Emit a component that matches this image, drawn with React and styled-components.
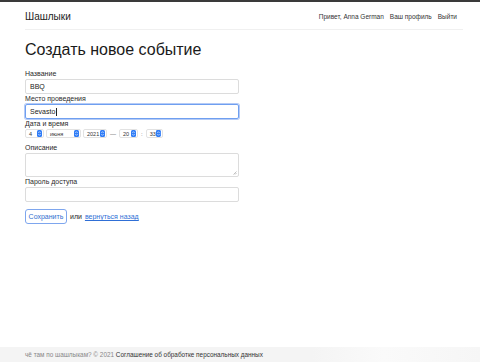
import React from "react";
import styled, { createGlobalStyle } from "styled-components";

const GlobalStyle = createGlobalStyle`
  html, body {
    margin: 0;
    padding: 0;
    background: #fff;
  }
  body {
    font-family: "Liberation Sans", Arial, sans-serif;
    color: #222;
  }
`;

const Page = styled.div`
  min-height: 362px;
  display: flex;
  flex-direction: column;
  border-top: 2px solid #3a3a3a;
  box-sizing: border-box;
`;

const Container = styled.div`
  width: 438px;
  margin-left: 25px;
  box-sizing: border-box;
`;

const Header = styled.header`
  display: flex;
  align-items: center;
  justify-content: space-between;
  height: 27px;
  border-bottom: 1px solid #f0f0f0;
`;

const Brand = styled.div`
  font-size: 10px;
  color: #222;
  padding-top: 1px;
`;

const Nav = styled.nav`
  display: flex;
  gap: 6px;
  font-size: 6.5px;
  color: #333;
  padding-right: 6px;
  padding-top: 1px;
`;

const Title = styled.h1`
  font-size: 16px;
  font-weight: 500;
  margin: 10px 0 10px;
  line-height: 20px;
  color: #1a1a1a;
`;

const Group = styled.div`
  margin-bottom: ${(p) => p.$gap || 1}px;
`;

const Label = styled.div`
  font-size: 7px;
  line-height: 8px;
  margin-bottom: 1px;
  color: #2a2a2a;
`;

const Field = styled.div`
  width: 214px;
  height: ${(p) => p.$h || 15}px;
  box-sizing: border-box;
  border: 1px solid ${(p) => (p.$focus ? "#6f9ff0" : "#dcdcdc")};
  box-shadow: ${(p) => (p.$focus ? "0 0 0 1px rgba(90,140,235,0.45)" : "none")};
  border-radius: 2px;
  font-size: 7px;
  display: flex;
  align-items: center;
  padding-left: 4px;
  color: #222;
  position: relative;
`;

const Caret = styled.span`
  display: inline-block;
  width: 1px;
  height: 8px;
  background: #222;
  margin-left: 1px;
`;

const Grip = styled.svg`
  position: absolute;
  right: 1px;
  bottom: 1px;
`;

const DateRow = styled.div`
  display: flex;
  align-items: center;
  gap: 2px;
  font-size: 6px;
  color: #333;
`;

const Select = styled.div`
  width: ${(p) => p.$w}px;
  height: 9px;
  box-sizing: border-box;
  border: 1px solid #e2e2e2;
  border-radius: 2px;
  display: flex;
  align-items: center;
  justify-content: space-between;
  padding-left: ${(p) => p.$pl || 3}px;
  padding-right: 1px;
  font-size: 5.5px;
`;

const Sep = styled.span`
  margin: 0 1px;
  font-size: 6px;
  color: #555;
`;

const Stepper = () => (
  <svg width="5" height="7" viewBox="0 0 5 7">
    <rect width="5" height="7" rx="1.5" fill="#2f7cf6" />
    <path d="M1.4 2.8 L2.5 1.7 L3.6 2.8 M1.4 4.2 L2.5 5.3 L3.6 4.2" stroke="#fff" strokeWidth="0.7" fill="none" />
  </svg>
);

const Actions = styled.div`
  display: flex;
  align-items: center;
  gap: 3px;
  margin-top: 7px;
  font-size: 7px;
`;

const Button = styled.button`
  height: 15px;
  width: 42px;
  padding: 0;
  border: 1px solid #7ea6ee;
  border-radius: 3px;
  background: #fff;
  color: #2f6fd0;
  font-family: inherit;
  font-size: 7px;
`;

const Link = styled.a`
  color: #2f6fd6;
  text-decoration: underline;
`;

const Footer = styled.footer`
  margin-top: auto;
  height: 15px;
  background: linear-gradient(90deg, #f4f4f4 0%, #f4f4f4 65%, #fafafa 80%, #f6f6f6 100%);
  display: flex;
  align-items: center;
`;

const FooterText = styled.div`
  font-size: 6.4px;
  color: #888;
  span {
    color: #333;
  }
`;

export default function App() {
  return (
    <>
      <GlobalStyle />
      <Page>
        <Container>
          <Header>
            <Brand>Шашлыки</Brand>
            <Nav>
              <span>Привет, Anna German</span>
              <span>Ваш профиль</span>
              <span>Выйти</span>
            </Nav>
          </Header>
          <Title>Создать новое событие</Title>
          <Group>
            <Label>Название</Label>
            <Field>BBQ</Field>
          </Group>
          <Group>
            <Label>Место проведения</Label>
            <Field $focus>
              Sevasto
              <Caret />
            </Field>
          </Group>
          <Group $gap={6}>
            <Label>Дата и время</Label>
            <DateRow>
              <Select $w={19}>4<Stepper /></Select>
              <Select $w={35}>июня<Stepper /></Select>
              <Select $w={24}>2021<Stepper /></Select>
              <Sep>—</Sep>
              <Select $w={19}>20<Stepper /></Select>
              <Sep>:</Sep>
              <Select $w={17}>33<Stepper /></Select>
            </DateRow>
          </Group>
          <Group>
            <Label>Описание</Label>
            <Field $h={24}>
              <Grip width="4" height="4" viewBox="0 0 4 4">
                <path d="M0.5 3.5 L3.5 0.5 M2 3.5 L3.5 2" stroke="#999" strokeWidth="0.6" />
              </Grip>
            </Field>
          </Group>
          <Group>
            <Label>Пароль доступа</Label>
            <Field $h={15} />
          </Group>
          <Actions>
            <Button>Сохранить</Button>
            <span>или</span>
            <Link href="#">вернуться назад</Link>
          </Actions>
        </Container>
        <Footer>
          <Container>
            <FooterText>
              чё там по шашлыкам? © 2021 <span>Соглашение об обработке персональных данных</span>
            </FooterText>
          </Container>
        </Footer>
      </Page>
    </>
  );
}
